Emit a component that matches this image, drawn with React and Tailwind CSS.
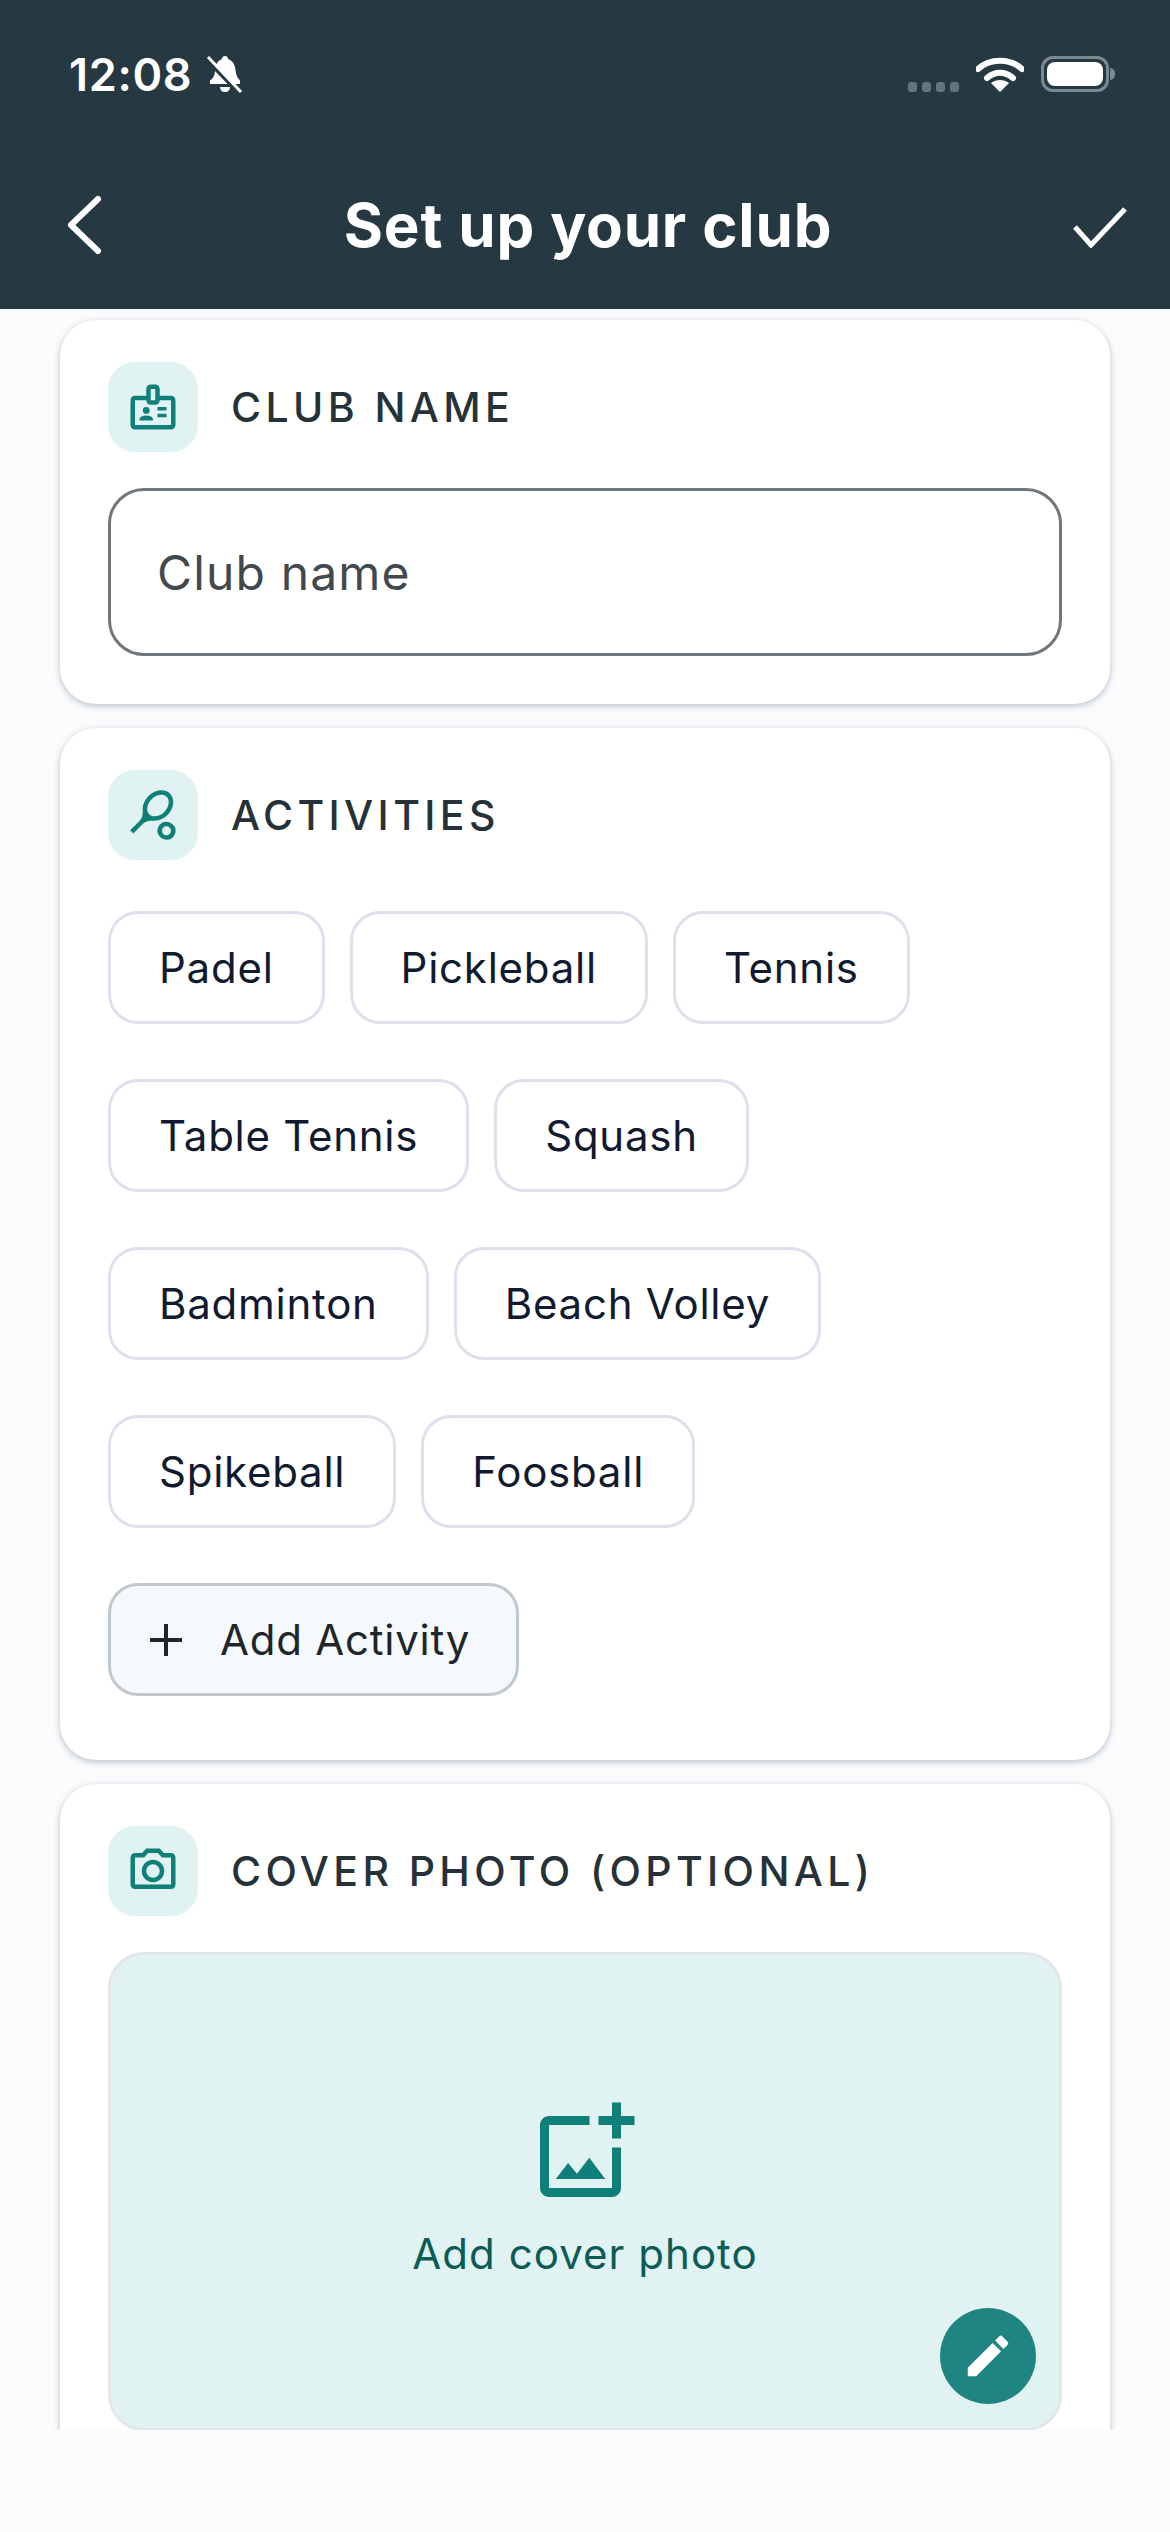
import React from 'react';
import {
  MdOutlineBadge,
  MdOutlineSportsTennis,
  MdOutlinePhotoCamera,
  MdOutlineAddPhotoAlternate,
  MdEdit,
} from 'react-icons/md';

const ROWS = [
  ['Padel', 'Pickleball', 'Tennis'],
  ['Table Tennis', 'Squash'],
  ['Badminton', 'Beach Volley'],
  ['Spikeball', 'Foosball'],
];

const StatusBar = () => (
  <div className="h-[150px] flex items-start justify-between pl-[69px] pr-[55px] pt-[52px]">
    <div className="flex items-center gap-[14px]">
      <span className="text-[45px] leading-[45px] font-semibold text-white tracking-[0.015em]">12:08</span>
      <svg width="38" height="40" viewBox="0 0 38 40" fill="none">
        <path d="M19 1c2 0 3 1.500 3.400 3.300C27 6 29 10 29.500 15c.5 5 2 8 4.500 10.500V29H4v-3.500C8 23 9 19 9 15c.5-5 2.500-9 6.600-10.700C16 2.500 17 1 19 1z" fill="#fff" />
        <path d="M14 32h10c0 3-2 5-5 5s-5-2-5-5z" fill="#fff" />
        <path d="M0 4l34 35" stroke="#263841" strokeWidth="4" />
        <path d="M2 2l33 35" stroke="#fff" strokeWidth="3" />
      </svg>
    </div>
    <div className="flex items-start gap-[17px] pt-[4px]">
      <div className="flex items-center gap-[5px] pt-[26px]">
        <span className="w-[9px] h-[10px] rounded-[3px] bg-[#66757c]" />
        <span className="w-[9px] h-[10px] rounded-[3px] bg-[#66757c]" />
        <span className="w-[9px] h-[10px] rounded-[3px] bg-[#66757c]" />
        <span className="w-[9px] h-[10px] rounded-[3px] bg-[#66757c]" />
      </div>
      <svg width="48" height="36" viewBox="0 0 48 36" fill="none">
        <path d="M2 13C14 2 34 2 46 13" stroke="#fff" strokeWidth="6" strokeLinecap="round" />
        <path d="M11 22c8-7 18-7 26 0" stroke="#fff" strokeWidth="6" strokeLinecap="round" />
        <path d="M24 36l-9-9c5-4 13-4 18 0z" fill="#fff" />
      </svg>
      <div className="flex items-center gap-[1px]">
        <div className="w-[68px] h-[36px] rounded-[12px] border-[3px] border-[#7b8a90] p-[3px]">
          <div className="w-full h-full rounded-[8px] bg-white" />
        </div>
        <div className="w-[5px] h-[12px] rounded-r-[5px] bg-[#7b8a90]" />
      </div>
    </div>
  </div>
);

const NavBar = () => (
  <div className="h-[159px] flex items-start justify-between pl-[65px] pr-[43px]">
    <svg width="38" height="60" viewBox="0 0 38 60" fill="none" className="mt-[45px]">
      <path d="M33 4L6 30l27 26" stroke="#fff" strokeWidth="6" strokeLinecap="round" strokeLinejoin="round" />
    </svg>
    <h1 className="text-[60px] leading-[72px] font-bold text-white mt-[39px] tracking-[0.014em]">Set up your club</h1>
    <svg width="54" height="42" viewBox="0 0 54 42" fill="none" className="mt-[56px]">
      <path d="M2 21l16 18L52 3" stroke="#fff" strokeWidth="5" />
    </svg>
  </div>
);

const SectionTitle = ({ icon, children }) => (
  <div className="flex items-center gap-[33px]">
    <div className="w-[90px] h-[90px] rounded-[27px] bg-[#e0f2f1] flex items-center justify-center text-[#0f7f7a]">
      {icon}
    </div>
    <h2 className="text-[41px] leading-[50px] font-medium tracking-[0.107em] text-[#263238]">{children}</h2>
  </div>
);

const Chip = ({ label }) => (
  <div className="h-[113px] px-[48px] flex items-center rounded-[30px] border-[3px] border-[#dde1ec] bg-white text-[42px] font-[440] tracking-[0.018em] text-[#111a2e]">
    {label}
  </div>
);

const Card = ({ className, children }) => (
  <section className={`bg-white rounded-[36px] px-[48px] pt-[42px] shadow-[0_2px_6px_rgba(30,40,50,0.28)] ${className}`}>
    {children}
  </section>
);

export default function App() {
  return (
    <div className="w-[1170px] h-[2532px] bg-[#f9fbfd] overflow-hidden font-['Inter',sans-serif]">
      <header className="bg-[#263841]">
        <StatusBar />
        <NavBar />
      </header>

      <main className="h-[2121px] overflow-hidden px-[60px] pt-[11px] flex flex-col gap-[24px]">
        <Card className="pb-[48px]">
          <SectionTitle icon={<MdOutlineBadge size={54} />}>CLUB NAME</SectionTitle>
          <div className="mt-[36px] h-[168px] rounded-[36px] border-[3px] border-[#6f767c] flex items-center pl-[46px] pt-[2px] text-[48px] tracking-[0.024em] text-[#41494f]">
            Club name
          </div>
        </Card>

        <Card className="pb-[64px]">
          <SectionTitle icon={<MdOutlineSportsTennis size={54} />}>ACTIVITIES</SectionTitle>
          <div className="mt-[51px] flex flex-col gap-[55px]">
            {ROWS.map((row, i) => (
              <div key={i} className="flex gap-[25px]">
                {row.map((label) => (
                  <Chip key={label} label={label} />
                ))}
              </div>
            ))}
            <div className="w-[411px] h-[113px] flex items-center pl-[38px] gap-[37px] rounded-[30px] border-[3px] border-[#c0c8d0] bg-[#f5f9fc] text-[42px] font-[440] tracking-[0.018em] text-[#1f262b]">
              <svg width="34" height="34" viewBox="0 0 34 34" fill="none" className="shrink-0">
                <path d="M17 1v32M1 17h32" stroke="#1f262b" strokeWidth="4" />
              </svg>
              Add Activity
            </div>
          </div>
        </Card>

        <Card className="shrink-0 pb-[48px]">
          <SectionTitle icon={<MdOutlinePhotoCamera size={54} />}>COVER PHOTO (OPTIONAL)</SectionTitle>
          <div className="relative mt-[36px] h-[479px] rounded-[36px] border-[3px] border-[#e3e7ea] bg-[#e0f2f1] flex flex-col items-center pt-[143px] text-[#0f7f7a]">
            <MdOutlineAddPhotoAlternate size={108} />
            <p className="mt-[22px] text-[42px] leading-[52px] tracking-[0.025em] text-[#0b5c56]">Add cover photo</p>
            <div className="absolute right-[23px] bottom-[24px] w-[96px] h-[96px] rounded-full bg-[#1f8583] flex items-center justify-center text-white">
              <MdEdit size={54} />
            </div>
          </div>
        </Card>
      </main>
    </div>
  );
}
